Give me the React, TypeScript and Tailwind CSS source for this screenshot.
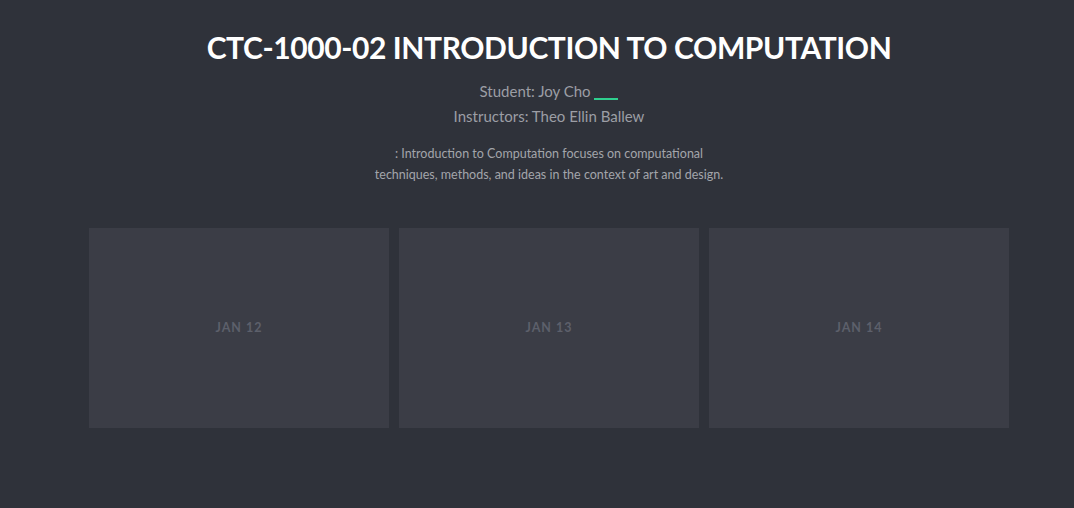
import React from "react";

const days = ["JAN 12", "JAN 13", "JAN 14"];

const App = () => {
  return (
    <div className="w-full min-h-screen h-[508px] bg-[#2f323a] pl-6 font-['Lato','Noto_Sans',sans-serif]">
      <div className="flex flex-col items-center pt-[27px]">
        <h1 className="text-[30px] leading-[40px] font-bold text-white tracking-[-0.4px]">
          CTC-1000-02 INTRODUCTION TO COMPUTATION
        </h1>
        <p className="mt-[12px] text-[15px] leading-[25px] text-[#9c9ea5]">
          Student: Joy Cho{" "}
          <span className="inline-block w-[24px] h-[2px] bg-[#2fcf8e] align-[-3px]" />
        </p>
        <p className="text-[15px] leading-[25px] text-[#9c9ea5]">Instructors: Theo Ellin Ballew</p>
        <p className="mt-[14px] w-[352px] text-center text-[12.5px] leading-[21px] text-[#a3a5ab]">
          : Introduction to Computation focuses on computational techniques, methods, and ideas in the context of art and design.
        </p>
        <div className="mt-[43px] flex gap-[10px]">
          {days.map((d) => (
            <div key={d} className="w-[300px] h-[200px] bg-[#3b3d46] flex items-center justify-center">
              <span className="text-[12.5px] font-bold tracking-[1px] text-[#5d606b]">{d}</span>
            </div>
          ))}
        </div>
      </div>
    </div>
  );
};

export default App;
